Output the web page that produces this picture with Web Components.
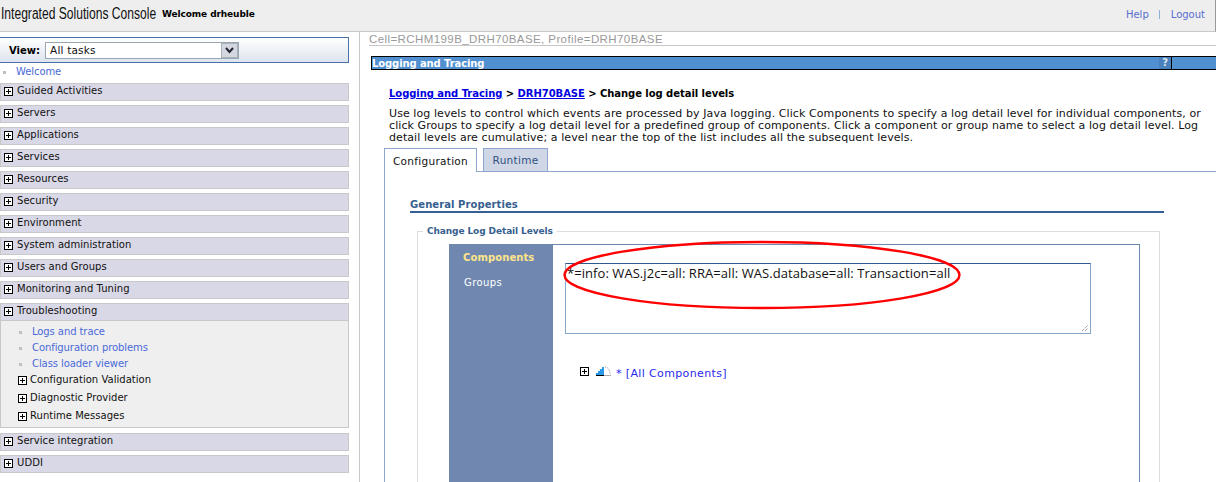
<!DOCTYPE html>
<html><head><meta charset="utf-8">
<style>
html,body{margin:0;padding:0;background:#fff;overflow:hidden;width:1216px;height:482px}
body{font-family:"DejaVu Sans",Verdana,sans-serif;font-size:10px;color:#000}
</style></head>
<body>
<isc-console></isc-console>
<script>
function tpl(html){const t=document.createElement('template');t.innerHTML=html;return t;}
function def(name,html,init){
  const t=tpl(html);
  customElements.define(name,class extends HTMLElement{
    connectedCallback(){ if(this.shadowRoot) return; this.attachShadow({mode:'open'}).appendChild(t.content.cloneNode(true)); if(init) init(this); }
  });
}
def('isc-toggle',`<style>:host{display:block;width:9px;height:9px;line-height:0;flex:none}svg{display:block}</style>
<svg width="9" height="9" viewBox="0 0 9 9"><rect x=".5" y=".5" width="8" height="8" fill="#fff" stroke="#000" shape-rendering="crispEdges"/><path d="M2 4.5h5M4.5 2v5" stroke="#000" fill="none" shape-rendering="crispEdges"/></svg>`,
el=>{ if(el.hasAttribute('open')) el.shadowRoot.querySelector('path').setAttribute('d','M2 4.5h5'); });

def('isc-header',`<style>
:host{display:flex;align-items:center;height:28px;padding-bottom:3px;background:#eeeeee;border-bottom:1px solid #c8c8c8;border-right:1px solid #999;box-sizing:content-box;flex:none}
.brand{font:16px/1 "Liberation Sans",sans-serif;margin-left:1px;color:#111;width:155px;white-space:nowrap;transform:scaleX(.755);transform-origin:left}
.wel{font:bold 9px "DejaVu Sans",sans-serif;letter-spacing:-.1px;margin-left:6px;color:#000}
.sp{flex:1}
a{font:10px "DejaVu Sans",sans-serif;color:#5a6fd0}
.sep{width:1px;height:9px;background:#8fb0d8;margin:0 11px 0 10px}
.end{margin-right:10px}
</style><span class="brand">Integrated Solutions Console</span><span class="wel">Welcome drheuble</span><span class="sp"></span><a>Help</a><span class="sep"></span><a class="end">Logout</a>`);

def('isc-view',`<style>
:host{display:flex;align-items:center;box-sizing:border-box;height:26px;width:349px;border:1px solid #4b72a8;border-left:0;background:linear-gradient(#fff,#dde4ee);padding-left:9px;font:bold 10px "DejaVu Sans",sans-serif}
.sel{margin-left:5px;width:188px;height:15px;border:1px solid #9aa6b4;background:#fff;display:flex;align-items:center;justify-content:space-between;font-weight:normal;padding-left:4px;box-sizing:content-box;color:#111;font-size:10.5px;letter-spacing:.2px}
.btn{width:15px;height:13px;border:1px solid #a8b0b8;background:#d4d7e0;display:block;line-height:0}
</style>View:<div class="sel">All tasks<svg class="btn" viewBox="0 0 15 13"><path d="M4 4l3.5 4 3.5-4" fill="none" stroke="#223" stroke-width="2"/></svg></div>`);

def('isc-navhead',`<style>
:host{display:flex;align-items:flex-start;box-sizing:border-box;height:18px;background:#d9d8e6;border:1px solid #c8c8c8;padding:2px 0 0 3px;font:10px/12px "DejaVu Sans",sans-serif;letter-spacing:.06px;color:#111;flex:none}
isc-toggle{margin-top:1px;margin-right:4px}
slot{display:block;margin-top:-1px}
</style><isc-toggle></isc-toggle><slot></slot>`,el=>{ if(el.hasAttribute('open')) el.shadowRoot.querySelector('isc-toggle').setAttribute('open',''); });

def('isc-navlink',`<style>
:host{display:flex;align-items:center;height:16px;font:10px/16px "DejaVu Sans",sans-serif;letter-spacing:-.08px;color:#4a6ad8;padding-left:var(--ind,0)}
i{width:3px;height:3px;background:#c0c0c0;margin-right:10px;flex:none;margin-top:1px}
</style><i></i><slot></slot>`);

def('isc-navsub',`<style>
:host{display:flex;align-items:center;height:18px;font:10px/18px "DejaVu Sans",sans-serif;letter-spacing:.03px;color:#111;padding-left:17px}
isc-toggle{margin-right:3px;margin-top:-1px}
slot{display:block;margin-top:-3px}
</style><isc-toggle></isc-toggle><slot></slot>`);

def('isc-nav',`<style>
:host{display:flex;flex-direction:column;width:349px;padding-top:5px;flex:none}
.welcome{--ind:3px;margin:1px 0 3px}
.rows{display:flex;flex-direction:column;gap:4px}
.gap{display:flex;flex-direction:column}
.body{box-sizing:border-box;height:107px;background:#efefef;border:1px solid #c8c8c8;border-top:0;padding:3px 0 0 0}
.body isc-navlink{--ind:18px}
.after{margin-top:1px}
</style>
<isc-view></isc-view>
<isc-navlink class="welcome">Welcome</isc-navlink>
<div class="rows">
<isc-navhead>Guided Activities</isc-navhead>
<isc-navhead>Servers</isc-navhead>
<isc-navhead>Applications</isc-navhead>
<isc-navhead>Services</isc-navhead>
<isc-navhead>Resources</isc-navhead>
<isc-navhead>Security</isc-navhead>
<isc-navhead>Environment</isc-navhead>
<isc-navhead>System administration</isc-navhead>
<isc-navhead>Users and Groups</isc-navhead>
<isc-navhead>Monitoring and Tuning</isc-navhead>
<div class="gap"><isc-navhead open>Troubleshooting</isc-navhead>
<div class="body">
<isc-navlink>Logs and trace</isc-navlink>
<isc-navlink>Configuration problems</isc-navlink>
<isc-navlink>Class loader viewer</isc-navlink>
<isc-navsub>Configuration Validation</isc-navsub>
<isc-navsub>Diagnostic Provider</isc-navsub>
<isc-navsub>Runtime Messages</isc-navsub>
</div></div>
<isc-navhead class="after">Service integration</isc-navhead>
<isc-navhead>UDDI</isc-navhead>
</div>`);

def('isc-titlebar',`<style>
:host{display:flex;align-items:center;box-sizing:border-box;height:14px;background:#5090d0;border-top:1px solid #000;border-bottom:1px solid #000;border-left:1px solid #000;color:#fff;font:bold 10px/12px "DejaVu Sans",sans-serif;letter-spacing:-.1px;flex:none}
.sp{flex:1}
.t{padding-top:1px}
.q{width:12px;height:12px;background:#4a80bc;color:#dfe8f2;font:bold 10px/12px "DejaVu Sans",sans-serif;text-align:center}
.bar{width:1px;height:12px;background:#000;margin-right:44px}
</style><span class="t">Logging and Tracing</span><span class="sp"></span><span class="q">?</span><span class="bar"></span>`);

def('isc-tabs',`<style>
:host{display:flex;align-items:flex-end;height:24px;flex:none;font:10.5px "DejaVu Sans",sans-serif;letter-spacing:.3px}
.t{box-sizing:border-box;display:flex;align-items:center;justify-content:center;height:24px}
.a{width:93px;border:1px solid #8fa6cf;border-bottom:0;background:#fff;color:#111}
.b{width:65px;border:1px solid #8fa6cf;background:#cfd6e6;color:#2f5080}
.l{flex:1;height:1px;background:#8fa6cf}
.u{width:6px;height:1px;background:#8fa6cf}
</style><div class="t a">Configuration</div><div class="u"></div><div class="t b">Runtime</div><div class="l"></div>`);

def('isc-levels',`<style>
:host{display:flex;box-sizing:border-box;width:691px;height:300px;border:1px solid #6f88b0;border-bottom:0;margin-left:31px;flex:none}
.side{width:103px;background:#7088b0;flex:none;box-sizing:border-box;padding:6px 0 0 13px;font:bold 10px/14px "DejaVu Sans",sans-serif;letter-spacing:.1px;color:#ffe58a}
.side div+div{margin-top:11px;margin-left:1px;color:#fff;font-weight:normal;letter-spacing:.4px}
.main{flex:1;padding:18px 0 0 12px}
.ta{box-sizing:border-box;width:526px;height:71px;border:1px solid #84a8cc;border-top-color:#2f5a90;background:#fff;padding:2px 1px;font:13px/14px "Open Sans","DejaVu Sans",sans-serif;letter-spacing:.06px;color:#111;position:relative}
.grip{position:absolute;right:1px;bottom:1px;display:block}
.tree{display:flex;align-items:flex-start;margin:32px 0 0 15px;color:#2a2aee;font:11px/14px "DejaVu Sans",sans-serif;letter-spacing:.37px}
.tree isc-toggle{margin-top:1px}
svg.lvl{margin:0 5px 0 7px;display:block}
.lab{margin:1px 0 0 0}
</style>
<div class="side"><div>Components</div><div>Groups</div></div>
<div class="main">
<div class="ta">*=info: WAS.j2c=all: RRA=all: WAS.database=all: Transaction=all<svg class="grip" width="8" height="8" viewBox="0 0 8 8"><path d="M1 7l6-6M4 7l3-3" stroke="#777" fill="none" stroke-dasharray="1 1"/></svg></div>
<div class="tree"><isc-toggle></isc-toggle><svg class="lvl" width="15" height="10" viewBox="0 0 15 10"><path d="M0 9V7h2V5h2V3h2V1h2v8z" fill="#2a9ae8"/><path d="M0 9.5h8" stroke="#000"/><path d="M8 9.5h7" stroke="#aaa"/><path d="M9 1c3 0 5 3 5 7" stroke="#999" stroke-dasharray="1 1" fill="none"/></svg><span class="lab">* [All Components]</span></div>
</div>`);

def('isc-content',`<style>
:host{display:flex;flex-direction:column;flex:1;min-width:0;box-sizing:border-box;border-left:1px solid #c8c8c8;position:relative;overflow:hidden}
.cell{margin-left:9px;height:13px;font:11.5px/15px "Liberation Sans",sans-serif;color:#999;border-bottom:1px solid #c8c8c8;flex:none;letter-spacing:.41px;overflow:hidden}
.panel{margin:10px 0 0 11px;display:flex;flex-direction:column;flex:1;min-height:0}
.crumb{margin:17px 0 0 18px;font:bold 10px/14px "DejaVu Sans",sans-serif;letter-spacing:-.05px;flex:none}
.crumb a{color:#0000e0;text-decoration:underline}
.desc{margin:7px 0 0 18px;width:822px;font:11px/12px "DejaVu Sans",sans-serif;letter-spacing:.08px;color:#111;flex:none}
isc-tabs{margin:4px 0 0 13px}
.tb{margin-left:13px;border-left:1px solid #8fa6cf;flex:1;display:flex;flex-direction:column;min-height:0}
.gp{margin:25px 0 0 25px;width:754px;height:16px;padding-top:1px;box-sizing:border-box;border-bottom:2px solid #365f96;color:#36608f;font:bold 10px/14px "DejaVu Sans",sans-serif;letter-spacing:.08px;flex:none}
.fs{margin:18px 0 0 32px;width:743px;box-sizing:border-box;border:1px solid #dedede;border-bottom:0;flex:1;padding-top:12px;position:relative}
.lg{position:absolute;left:5px;top:-7px;padding:0 4px;background:#fff;color:#36608f;font:bold 9px/12px "DejaVu Sans",sans-serif;letter-spacing:-.1px}
.oval{position:absolute;left:202px;top:208px;pointer-events:none}
</style>
<div class="cell">Cell=RCHM199B_DRH70BASE, Profile=DRH70BASE</div>
<div class="panel">
<isc-titlebar></isc-titlebar>
<div class="crumb"><a>Logging and Tracing</a> &gt; <a>DRH70BASE</a> &gt; Change log detail levels</div>
<div class="desc">Use log levels to control which events are processed by Java logging. Click Components to specify a log detail level for individual components, or click Groups to specify a log detail level for a predefined group of components. Click a component or group name to select a log detail level. Log detail levels are cumulative; a level near the top of the list includes all the subsequent levels.</div>
<isc-tabs></isc-tabs>
<div class="tb">
<div class="gp">General Properties</div>
<div class="fs"><span class="lg">Change Log Detail Levels</span><isc-levels></isc-levels></div>
</div>
</div>
<svg class="oval" width="400" height="70" viewBox="0 0 400 70"><ellipse cx="200" cy="35" rx="197.5" ry="33" fill="none" stroke="#f00" stroke-width="2.4"/></svg>`);

def('isc-console',`<style>
:host{display:flex;flex-direction:column;width:1216px;height:482px;overflow:hidden}
.row{display:flex;flex:1;min-height:0}
.g{width:10px;flex:none}
</style><isc-header></isc-header><div class="row"><isc-nav></isc-nav><div class="g"></div><isc-content></isc-content></div>`);
</script>
</body></html>
